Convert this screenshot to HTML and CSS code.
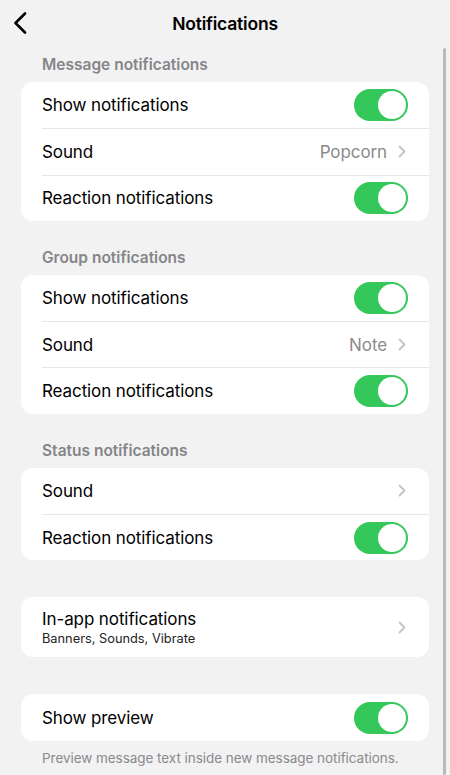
FILE: index.html
```html
<!DOCTYPE html>
<html>
<head>
<meta charset="utf-8">
<link rel="stylesheet" href="styles.css">
</head>
<body>
<div class="screen">
  <header class="nav">
    <svg class="back" width="14" height="22" viewBox="0 0 14 22"><path d="M12 1.5 L2.5 11 L12 20.5" fill="none" stroke="#000" stroke-width="2.6" stroke-linecap="round" stroke-linejoin="round"/></svg>
    <h1 class="title">Notifications</h1>
  </header>

  <main class="content">
    <div class="section-title">Message notifications</div>
    <div class="card">
      <div class="row"><span class="label">Show notifications</span><span class="toggle"><span class="knob"></span></span></div>
      <div class="row"><span class="label">Sound</span><span class="value">Popcorn<svg class="chev" width="8" height="13" viewBox="0 0 8 13"><path d="M1.5 1.5 L6.5 6.5 L1.5 11.5" fill="none" stroke="#c4c4c7" stroke-width="1.8" stroke-linecap="round" stroke-linejoin="round"/></svg></span></div>
      <div class="row"><span class="label">Reaction notifications</span><span class="toggle"><span class="knob"></span></span></div>
    </div>

    <div class="section-title gap">Group notifications</div>
    <div class="card">
      <div class="row"><span class="label">Show notifications</span><span class="toggle"><span class="knob"></span></span></div>
      <div class="row"><span class="label">Sound</span><span class="value">Note<svg class="chev" width="8" height="13" viewBox="0 0 8 13"><path d="M1.5 1.5 L6.5 6.5 L1.5 11.5" fill="none" stroke="#c4c4c7" stroke-width="1.8" stroke-linecap="round" stroke-linejoin="round"/></svg></span></div>
      <div class="row"><span class="label">Reaction notifications</span><span class="toggle"><span class="knob"></span></span></div>
    </div>

    <div class="section-title gap">Status notifications</div>
    <div class="card">
      <div class="row"><span class="label">Sound</span><span class="value"><svg class="chev" width="8" height="13" viewBox="0 0 8 13"><path d="M1.5 1.5 L6.5 6.5 L1.5 11.5" fill="none" stroke="#c4c4c7" stroke-width="1.8" stroke-linecap="round" stroke-linejoin="round"/></svg></span></div>
      <div class="row"><span class="label">Reaction notifications</span><span class="toggle"><span class="knob"></span></span></div>
    </div>

    <div class="card solo">
      <div class="row tall">
        <div class="stack"><span class="label">In-app notifications</span><span class="sub">Banners, Sounds, Vibrate</span></div>
        <span class="value"><svg class="chev" width="8" height="13" viewBox="0 0 8 13"><path d="M1.5 1.5 L6.5 6.5 L1.5 11.5" fill="none" stroke="#c4c4c7" stroke-width="1.8" stroke-linecap="round" stroke-linejoin="round"/></svg></span>
      </div>
    </div>

    <div class="card solo">
      <div class="row"><span class="label">Show preview</span><span class="toggle"><span class="knob"></span></span></div>
    </div>
    <div class="footnote">Preview message text inside new message notifications.</div>
  </main>
  <div class="scrollbar"></div>
</div>
</body>
</html>
```

FILE: styles.css
```css
* { box-sizing: border-box; }
html, body { margin: 0; padding: 0; }
body {
  background: #f2f2f2;
  font-family: Inter, "Noto Sans", "Liberation Sans", sans-serif;
  color: #000;
  width: 450px;
  height: 775px;
  overflow: hidden;
}
.screen { position: relative; width: 450px; height: 775px; }
.nav {
  height: 46px;
  display: flex;
  align-items: center;
  justify-content: center;
  position: relative;
}
.back { position: absolute; left: 13px; top: 12px; }
.title {
  margin: 0;
  font-size: 17.5px;
  font-weight: 600;
  letter-spacing: -0.2px;
}
.content { padding: 0 21px; }
.section-title {
  height: 36px;
  padding: 9px 21px 0;
  font-size: 15.5px;
  line-height: 19px;
  font-weight: 600;
  color: #858589;
}
.section-title.gap { margin-top: 18px; }
.card {
  background: #fff;
  border-radius: 12px;
  overflow: hidden;
}
.card.solo { margin-top: 37px; }
.row {
  height: 46.3px;
  display: flex;
  align-items: center;
  justify-content: space-between;
  margin-left: 21px;
  padding-right: 21px;
}
.row + .row { border-top: 1px solid #e6e6e8; }
.row.tall { height: 60px; }
.label {
  font-size: 17px;
  letter-spacing: -0.1px;
  color: #000;
}
.stack { display: flex; flex-direction: column; gap: 2px; }
.sub { font-size: 12.8px; color: #222; }
.value {
  display: flex;
  align-items: center;
  gap: 11px;
  font-size: 17px;
  color: #8a8a8e;
  letter-spacing: -0.1px;
}
.chev { display: block; margin-right: 2px; }
.toggle {
  width: 54px;
  height: 32px;
  border-radius: 16px;
  background: #34c759;
  position: relative;
  flex: none;
}
.knob {
  position: absolute;
  right: 2px;
  top: 2px;
  width: 28px;
  height: 28px;
  border-radius: 50%;
  background: #fff;
}
.footnote {
  padding: 9px 21px 0;
  font-size: 13.5px;
  color: #8a8a8e;
  letter-spacing: -0.05px;
}
.scrollbar {
  position: absolute;
  left: 443px;
  top: 48px;
  width: 3px;
  height: 727px;
  background: #b9b9b9;
  border-radius: 1.5px;
}
```
